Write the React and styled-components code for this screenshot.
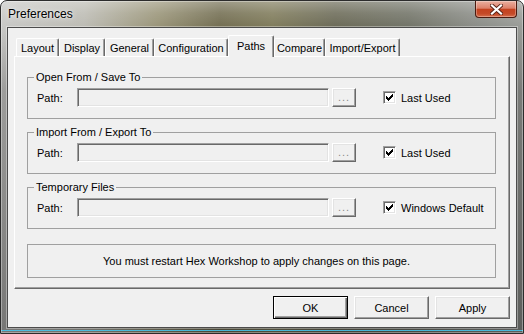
import React from "react";
import styled, { createGlobalStyle } from "styled-components";

const FONT = '"Liberation Sans", Arial, sans-serif';

const GlobalStyle = createGlobalStyle`
  html, body { margin: 0; padding: 0; background: #ffffff; }
  body { font-family: ${FONT}; font-size: 11px; color: #000; }
  * { box-sizing: border-box; }
`;

const Window = styled.div`
  width: 524px;
  height: 334px;
  display: flex;
  flex-direction: column;
  border: 1px solid #2c2c2c;
  border-radius: 7px 7px 0 0;
  overflow: hidden;
  background:
    linear-gradient(0deg, transparent 2px, rgba(70, 200, 240, 0.85) 2px, rgba(70, 200, 240, 0.85) 3px, transparent 3px),
    linear-gradient(180deg, rgba(255, 255, 255, 0.32) 0px, rgba(255, 255, 255, 0.12) 12px, rgba(0, 0, 0, 0) 26px, rgba(30, 30, 30, 0.25) 90px, rgba(20, 20, 20, 0.45) 100%),
    linear-gradient(90deg, #c8c8c6 0%, #bdbcb4 16%, #9a9579 30%, #736e52 42%, #807c5c 52%, #6c6b58 64%, #727468 78%, #8a8c86 90%, #9a9c98 100%);
  box-shadow: inset 0 0 0 1px rgba(255, 255, 255, 0.35);
`;

const TitleBar = styled.div`
  height: 26px;
  display: flex;
  align-items: center;
  padding-left: 7px;
`;

const Title = styled.span`
  font-family: ${FONT};
  font-size: 12px;
  color: #000;
  text-shadow: 0 0 6px rgba(255, 255, 255, 0.9), 0 0 2px rgba(255, 255, 255, 0.8);
`;

const CloseButton = styled.div`
  align-self: flex-start;
  margin: 0 6px 0 auto;
  width: 42px;
  height: 17px;
  display: flex;
  align-items: center;
  justify-content: center;
  border: 1px solid #4b1a0f;
  border-top: none;
  border-radius: 0 0 4px 4px;
  background: linear-gradient(180deg, #eab0a0 0%, #dc806a 45%, #c4421f 52%, #c54a28 80%, #d6704e 100%);
  box-shadow: inset 0 0 0 1px rgba(255, 255, 255, 0.3);
`;

const Client = styled.div`
  flex: 1;
  margin: 0 6px 5px;
  border: 1px solid #4c4c4c;
  background: #f0f0f0;
  display: flex;
  flex-direction: column;
  padding: 7px 6px 8px;
  box-shadow: 0 0 0 1px rgba(255, 255, 255, 0.35);
`;

const TabStrip = styled.div`
  height: 21px;
  display: flex;
  align-items: flex-end;
  padding-left: 2px;
  position: relative;
  z-index: 1;
`;

const Tab = styled.div`
  width: ${(p) => p.$w}px;
  height: ${(p) => (p.$active ? 22 : 18)}px;
  margin-bottom: ${(p) => (p.$active ? -1 : 0)}px;
  display: flex;
  align-items: center;
  justify-content: center;
  padding-bottom: ${(p) => (p.$active ? 2 : 0)}px;
  background: #f0f0f0;
  border-top: 1px solid #ffffff;
  border-left: 1px solid #ffffff;
  border-right: 1px solid #696969;
  border-radius: 2px 2px 0 0;
  box-shadow: inset -1px 0 0 #a0a0a0;
  white-space: nowrap;
  font-size: 11px;
`;

const Panel = styled.div`
  flex: 1;
  display: flex;
  flex-direction: column;
  gap: 7px;
  padding: 14px 13px 0 12px;
  border-top: 1px solid #ffffff;
  border-left: 1px solid #ffffff;
  border-right: 1px solid #696969;
  border-bottom: 1px solid #696969;
  box-shadow: inset -1px -1px 0 #a0a0a0;
`;

const Group = styled.fieldset`
  margin: 0;
  min-width: 0;
  padding: 4px 10px 11px 9px;
  border: 1px solid #a0a0a0;
`;

const Legend = styled.legend`
  font-size: 11px;
  line-height: 13px;
  padding: 0 2px;
  margin-left: -3px;
`;

const Row = styled.div`
  display: flex;
  align-items: center;
  height: 19px;
`;

const PathLabel = styled.span`
  width: 40px;
`;

const PathField = styled.div`
  width: 252px;
  height: 19px;
  background: #f0f0f0;
  border: 1px solid;
  border-color: #a0a0a0 #ffffff #ffffff #a0a0a0;
  box-shadow: inset 1px 1px 0 #696969, inset -1px -1px 0 #e3e3e3;
`;

const BrowseButton = styled.div`
  margin-left: 3px;
  width: 24px;
  height: 19px;
  display: flex;
  align-items: center;
  justify-content: center;
  padding-bottom: 1px;
  color: #8a8a8a;
  letter-spacing: 1px;
  border: 1px solid;
  border-color: #ffffff #696969 #696969 #ffffff;
  box-shadow: inset -1px -1px 0 #a0a0a0, inset 1px 1px 0 #e3e3e3;
`;

const CheckBox = styled.div`
  margin-left: 27px;
  width: 13px;
  height: 13px;
  display: flex;
  align-items: center;
  justify-content: center;
  background: #ffffff;
  border: 1px solid;
  border-color: #a0a0a0 #ffffff #ffffff #a0a0a0;
  box-shadow: inset 1px 1px 0 #696969, inset -1px -1px 0 #e3e3e3;
`;

const CheckLabel = styled.span`
  margin-left: 5px;
`;

const Message = styled.div`
  margin-top: 8px;
  height: 34px;
  border: 1px solid #a0a0a0;
  display: flex;
  align-items: center;
  justify-content: center;
  padding-right: 10px;
`;

const ButtonRow = styled.div`
  margin-top: 7px;
  height: 23px;
  display: flex;
  justify-content: flex-end;
  gap: 6px;
`;

const DialogButton = styled.div`
  width: 75px;
  height: 23px;
  display: flex;
  align-items: center;
  justify-content: center;
  font-size: 11px;
  border: 1px solid;
  border-color: ${(p) => (p.$default ? "#000 #000 #000 #000" : "#ffffff #696969 #696969 #ffffff")};
  box-shadow: ${(p) =>
    p.$default
      ? "inset 1px 1px 0 #ffffff, inset -1px -1px 0 #696969, inset -2px -2px 0 #a0a0a0"
      : "inset -1px -1px 0 #a0a0a0, inset 1px 1px 0 #e3e3e3"};
`;

const CheckMark = () => (
  <svg width="7" height="7" viewBox="0 0 7 7" shapeRendering="crispEdges">
    <rect x="0" y="2" width="1" height="3" fill="#000" />
    <rect x="1" y="3" width="1" height="3" fill="#000" />
    <rect x="2" y="4" width="1" height="3" fill="#000" />
    <rect x="3" y="3" width="1" height="3" fill="#000" />
    <rect x="4" y="2" width="1" height="3" fill="#000" />
    <rect x="5" y="1" width="1" height="3" fill="#000" />
    <rect x="6" y="0" width="1" height="3" fill="#000" />
  </svg>
);

const CloseGlyph = () => (
  <svg width="13" height="11" viewBox="0 0 13 11">
    <path d="M2 1.5 L11 9.5 M11 1.5 L2 9.5" stroke="#5a2418" strokeWidth="4" strokeLinecap="square" />
    <path d="M2 1.5 L11 9.5 M11 1.5 L2 9.5" stroke="#ffffff" strokeWidth="2.2" strokeLinecap="square" />
  </svg>
);

const tabs = [
  { label: "Layout", w: 43 },
  { label: "Display", w: 46 },
  { label: "General", w: 49 },
  { label: "Configuration", w: 74 },
  { label: "Paths", w: 46, active: true },
  { label: "Compare", w: 51 },
  { label: "Import/Export", w: 75 },
];

const groups = [
  { title: "Open From / Save To", check: "Last Used" },
  { title: "Import From / Export To", check: "Last Used" },
  { title: "Temporary Files", check: "Windows Default" },
];

export default function App() {
  return (
    <>
      <GlobalStyle />
      <Window>
        <TitleBar>
          <Title>Preferences</Title>
          <CloseButton>
            <CloseGlyph />
          </CloseButton>
        </TitleBar>
        <Client>
          <TabStrip>
            {tabs.map((t) => (
              <Tab key={t.label} $w={t.w} $active={t.active}>
                {t.label}
              </Tab>
            ))}
          </TabStrip>
          <Panel>
            {groups.map((g) => (
              <Group key={g.title}>
                <Legend>{g.title}</Legend>
                <Row>
                  <PathLabel>Path:</PathLabel>
                  <PathField />
                  <BrowseButton>...</BrowseButton>
                  <CheckBox>
                    <CheckMark />
                  </CheckBox>
                  <CheckLabel>{g.check}</CheckLabel>
                </Row>
              </Group>
            ))}
            <Message>You must restart Hex Workshop to apply changes on this page.</Message>
          </Panel>
          <ButtonRow>
            <DialogButton $default>OK</DialogButton>
            <DialogButton>Cancel</DialogButton>
            <DialogButton>Apply</DialogButton>
          </ButtonRow>
        </Client>
      </Window>
    </>
  );
}
